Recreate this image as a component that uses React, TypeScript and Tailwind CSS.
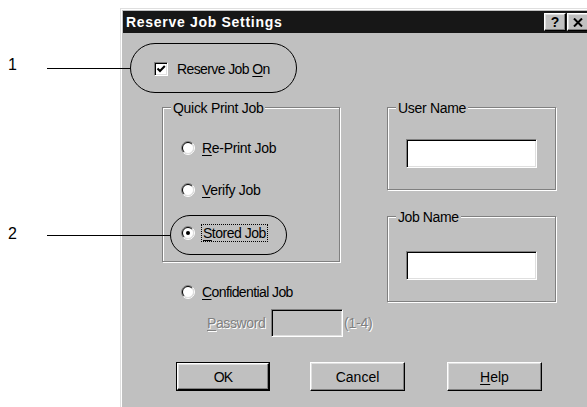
import React from "react";

function Radio({ checked }: { checked?: boolean }) {
  return (
    <svg width="14" height="14" viewBox="0 0 14 14" className="shrink-0">
      <circle cx="7" cy="7" r="5.5" fill="#fff" />
      <path d="M2.4 11.6 A6.5 6.5 0 0 1 11.6 2.4" fill="none" stroke="#808080" strokeWidth="1" />
      <path d="M11.6 2.4 A6.5 6.5 0 0 1 2.4 11.6" fill="none" stroke="#ffffff" strokeWidth="1" />
      <path d="M3.1 10.9 A5.5 5.5 0 0 1 10.9 3.1" fill="none" stroke="#000" strokeWidth="1" />
      <path d="M10.9 3.1 A5.5 5.5 0 0 1 3.1 10.9" fill="none" stroke="#dfdfdf" strokeWidth="1" />
      {checked && <circle cx="7" cy="7" r="2" fill="#000" />}
    </svg>
  );
}

function Checkbox() {
  return (
    <div className="w-[14px] h-[14px] bg-white border border-t-[#808080] border-l-[#808080] border-b-white border-r-white shadow-[inset_1px_1px_0_#000,inset_-1px_-1px_0_#dfdfdf] flex items-center justify-center shrink-0">
      <svg width="10" height="10" viewBox="0 0 10 10">
        <polyline points="1.5,4.5 4,7 8.8,2" fill="none" stroke="#000" strokeWidth="2" />
      </svg>
    </div>
  );
}

function TextBox() {
  return (
    <div className="w-[131px] h-[29px] bg-white border border-t-[#808080] border-l-[#808080] border-b-white border-r-white shadow-[inset_1px_1px_0_#000,inset_-1px_-1px_0_#dfdfdf]" />
  );
}

function Group({
  label,
  track,
  className,
  children,
}: {
  label: string;
  track: string;
  className: string;
  children?: React.ReactNode;
}) {
  return (
    <div
      className={
        "relative border border-[#808080] shadow-[1px_1px_0_#fff,inset_1px_1px_0_#fff] " +
        className
      }
    >
      <span className={"absolute left-[8px] top-[-8px] bg-[#c0c0c0] px-[2px] leading-[16px] whitespace-nowrap " + track}>
        {label}
      </span>
      {children}
    </div>
  );
}

function Button({ children, def, w }: { children: React.ReactNode; def?: boolean; w: string }) {
  if (def) {
    return (
      <div className={"h-[29px] border border-black " + w}>
        <div className="w-full h-full bg-[#c0c0c0] border border-t-white border-l-white border-b-black border-r-black shadow-[inset_-1px_-1px_0_#808080,inset_1px_1px_0_#dfdfdf] flex items-center justify-center leading-[16px]">
          {children}
        </div>
      </div>
    );
  }
  return (
    <div
      className={
        "h-[29px] bg-[#c0c0c0] border border-t-white border-l-white border-b-black border-r-black shadow-[inset_-1px_-1px_0_#808080,inset_1px_1px_0_#dfdfdf] flex items-center justify-center leading-[16px] " +
        w
      }
    >
      {children}
    </div>
  );
}

function TitleBtn({ children }: { children: React.ReactNode }) {
  return (
    <div className="w-[22px] h-[18px] bg-[#c0c0c0] border border-t-white border-l-white border-b-black border-r-black shadow-[inset_-1px_-1px_0_#808080,inset_1px_1px_0_#dfdfdf] flex items-center justify-center">
      {children}
    </div>
  );
}

export default function App() {
  return (
    <div className="relative w-[587px] h-[407px] bg-white overflow-hidden font-['Liberation_Sans',Arial,sans-serif] text-[14px] text-black">
      <div className="flex">
        <div className="ml-[120px] mt-[8px] w-[473px] h-[420px] shrink-0 bg-[#c0c0c0] border-l border-t border-[#dfdfdf] p-[2px] shadow-[inset_1px_1px_0_#fff]">
          {/* Title bar */}
          <div className="h-[22px] bg-[#171717] flex items-center pl-[3px] pr-[2px]">
            <span className="text-white font-bold text-[14px] tracking-[0.7px] leading-[16px]">Reserve Job Settings</span>
            <div className="flex-1" />
            <TitleBtn>
              <span className="font-bold text-[14px] leading-[14px] text-black">?</span>
            </TitleBtn>
            <div className="w-[1px]" />
            <TitleBtn>
              <svg width="10" height="9" viewBox="0 0 10 9">
                <path d="M1 0.5 L9 8.5 M9 0.5 L1 8.5" stroke="#000" strokeWidth="2" />
              </svg>
            </TitleBtn>
          </div>

          {/* Body */}
          <div className="flex flex-col">
            <div className="flex items-center ml-[31px] mt-[29px] h-[14px]">
              <Checkbox />
              <span className="ml-[9px] leading-[16px] tracking-[-0.6px] whitespace-nowrap">
                Reserve Job <span className="underline decoration-1 underline-offset-2">O</span>n
              </span>
            </div>

            <div className="flex ml-[39px] mt-[31px]">
              {/* Left column */}
              <div className="flex flex-col w-[178px] shrink-0">
                <Group label="Quick Print Job" track="tracking-[-0.3px]" className="w-[178px] h-[155px]">
                  <div className="flex flex-col pl-[18px]">
                    <div className="flex items-center h-[20px] mt-[30px]">
                      <Radio />
                      <span className="ml-[7px] leading-[16px] tracking-[-0.3px] whitespace-nowrap">
                        <span className="underline decoration-1 underline-offset-2">R</span>e-Print Job
                      </span>
                    </div>
                    <div className="flex items-center h-[20px] mt-[22px]">
                      <Radio />
                      <span className="ml-[7px] leading-[16px] tracking-[-0.3px] whitespace-nowrap">
                        <span className="underline decoration-1 underline-offset-2">V</span>erify Job
                      </span>
                    </div>
                    <div className="flex items-center h-[20px] mt-[23px]">
                      <Radio checked />
                      <span className="ml-[6px] leading-[16px] tracking-[-0.5px] whitespace-nowrap border border-dotted border-black px-[1px]">
                        <span className="underline decoration-1 underline-offset-2">S</span>tored Job
                      </span>
                    </div>
                  </div>
                </Group>

                <div className="flex items-center h-[20px] mt-[20px] pl-[19px]">
                  <Radio />
                  <span className="ml-[7px] leading-[16px] tracking-[-0.6px] whitespace-nowrap">
                    <span className="underline decoration-1 underline-offset-2">C</span>onfidential Job
                  </span>
                </div>

                <div className="flex items-center h-[28px] mt-[7px] pl-[45px]">
                  <span className="w-[64px] shrink-0 leading-[16px] tracking-[-0.4px] whitespace-nowrap text-[#808080] [text-shadow:1px_1px_0_#fff]">
                    <span className="underline decoration-1 underline-offset-2">P</span>assword
                  </span>
                  <div className="w-[72px] h-[28px] shrink-0 bg-[#c0c0c0] border border-t-[#808080] border-l-[#808080] border-b-white border-r-white shadow-[inset_1px_1px_0_#000,inset_-1px_-1px_0_#dfdfdf]" />
                  <span className="ml-[1px] shrink-0 leading-[16px] tracking-[-0.2px] whitespace-nowrap text-[#808080] [text-shadow:1px_1px_0_#fff]">
                    (1-4)
                  </span>
                </div>
              </div>

              {/* Right column */}
              <div className="flex flex-col ml-[47px]">
                <Group label="User Name" track="tracking-[-0.3px]" className="w-[169px] h-[83px]">
                  <div className="pl-[18px] pt-[31px]">
                    <TextBox />
                  </div>
                </Group>
                <Group label="Job Name" track="tracking-[-0.4px]" className="w-[169px] h-[86px] mt-[26px]">
                  <div className="pl-[18px] pt-[34px]">
                    <TextBox />
                  </div>
                </Group>
              </div>
            </div>

            {/* Buttons */}
            <div className="flex ml-[53px] mt-[25px]">
              <Button def w="w-[94px]">
                <span className="tracking-[-0.8px]">OK</span>
              </Button>
              <div className="ml-[40px]">
                <Button w="w-[95px]">Cancel</Button>
              </div>
              <div className="ml-[42px]">
                <Button w="w-[95px]">
                  <span>
                    <span className="underline decoration-1 underline-offset-2">H</span>elp
                  </span>
                </Button>
              </div>
            </div>
          </div>
        </div>
      </div>

      {/* Callout annotations */}
      <span className="absolute left-[8px] top-[56px] text-[16px] leading-[18px]">1</span>
      <div className="absolute left-[47px] top-[68px] w-[83px] h-[1px] bg-black" />
      <div className="absolute left-[130px] top-[43px] w-[167px] h-[50px] rounded-full border border-black" />

      <span className="absolute left-[8px] top-[225px] text-[16px] leading-[18px]">2</span>
      <div className="absolute left-[47px] top-[235px] w-[123px] h-[1px] bg-black" />
      <div className="absolute left-[170px] top-[215px] w-[117px] h-[40px] rounded-full border border-black" />
    </div>
  );
}
